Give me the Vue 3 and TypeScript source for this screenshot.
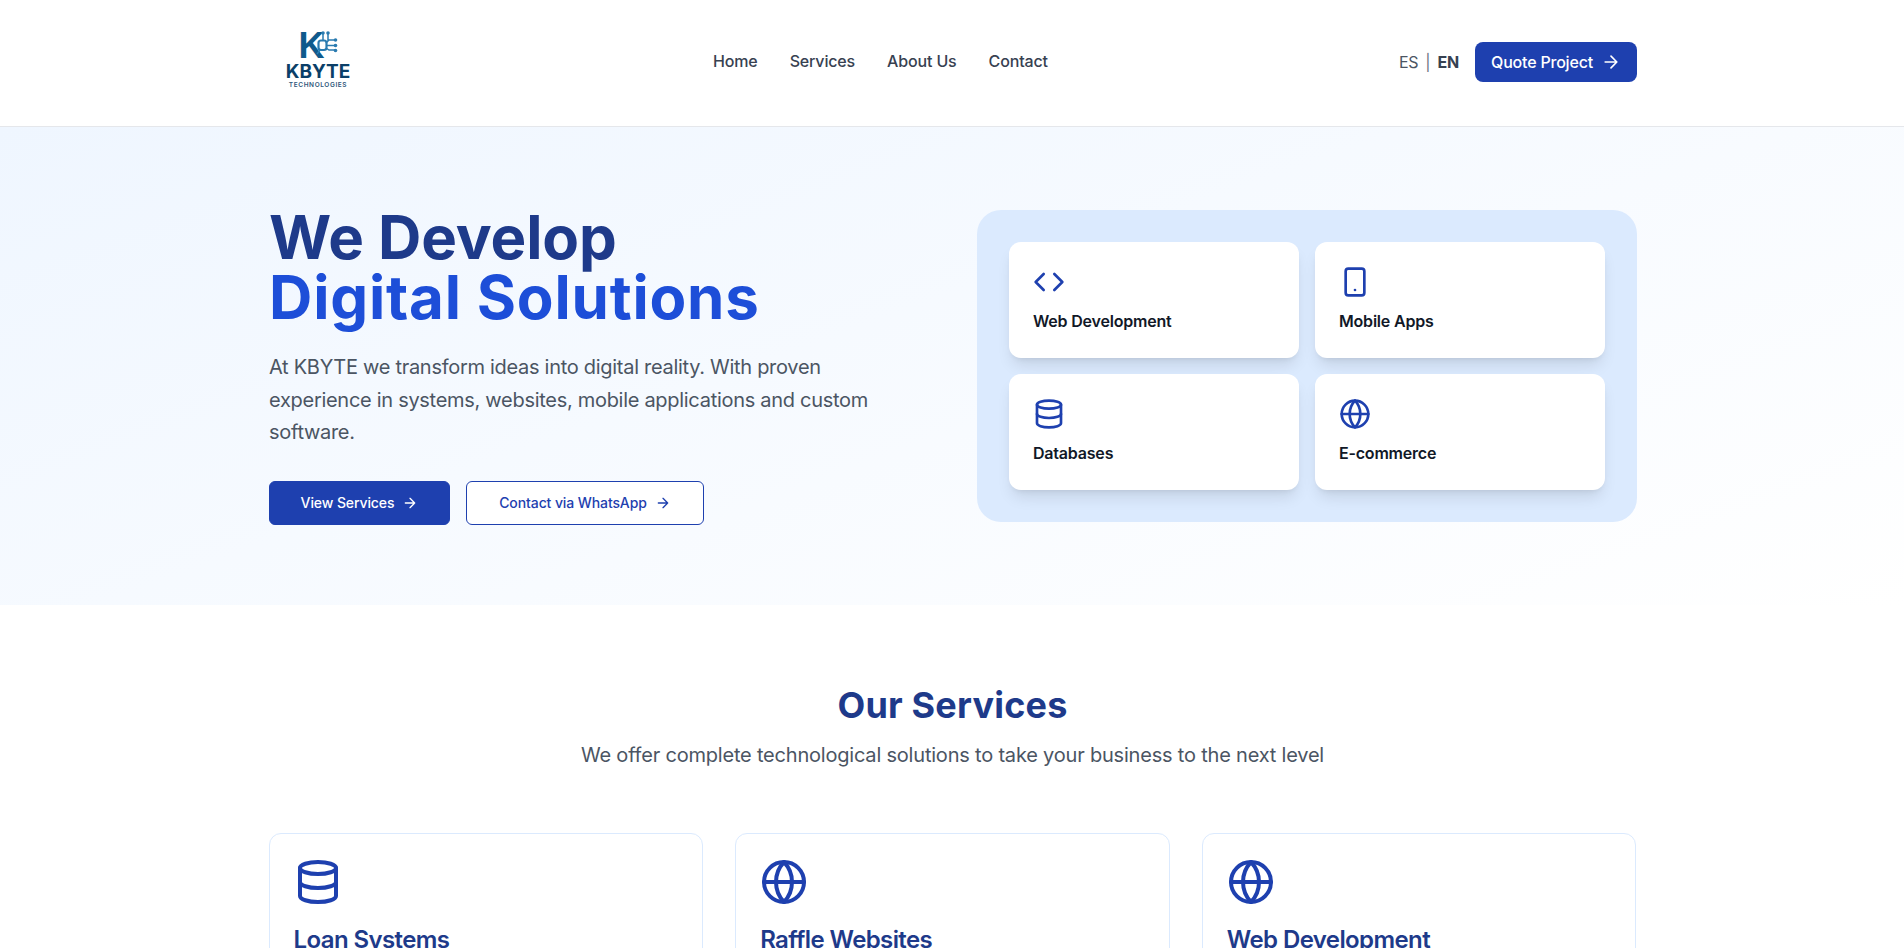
<template>
  <div class="page">
    <header class="header">
      <div class="header__inner">
        <a class="logo" aria-label="KBYTE Technologies">
          <svg width="100" height="94" viewBox="0 0 100 94">
            <text x="29.5" y="43" class="logo__k">K</text>
            <g fill="none" stroke="#2a7bb0" stroke-width="1.5">
              <rect x="49.5" y="25.5" width="8" height="9.5" rx="2.5" stroke-width="2.2" />
              <path d="M54 26v-8M59 26v-8M57 28l3-3h6M57 30.5h9M57 33l3 2h6M51 35l-3 4" />
            </g>
            <g fill="#2a7bb0">
              <circle cx="54" cy="18" r="1.8" />
              <circle cx="59" cy="18" r="1.8" />
              <circle cx="66.5" cy="25" r="1.8" />
              <circle cx="66.5" cy="30.5" r="1.8" />
              <circle cx="66.5" cy="35.5" r="1.8" />
            </g>
            <text x="49" y="63" text-anchor="middle" class="logo__name">KBYTE</text>
            <text x="49" y="72" text-anchor="middle" class="logo__sub">TECHNOLOGIES</text>
          </svg>
        </a>

        <nav class="nav">
          <a v-for="link in links" :key="link" class="nav__link">{{ link }}</a>
        </nav>

        <div class="header__actions">
          <div class="lang">
            <span>ES</span>
            <span class="lang__sep">|</span>
            <strong>EN</strong>
          </div>
          <button class="quote" type="button">
            Quote Project
            <svg class="quote__arrow" viewBox="0 0 24 24"><path d="M5 12h14M12 5l7 7-7 7" /></svg>
          </button>
        </div>
      </div>
    </header>

    <section class="hero">
      <div class="hero__inner">
        <div class="hero__copy">
          <h1 class="hero__title">We Develop<br /><span>Digital Solutions</span></h1>
          <p class="hero__lead">
            At KBYTE we transform ideas into digital reality. With proven
            experience in systems, websites, mobile applications and custom
            software.
          </p>
          <div class="hero__buttons">
            <button class="btn btn--solid" type="button">
              View Services
              <svg class="btn__arrow" viewBox="0 0 24 24"><path d="M5 12h14M12 5l7 7-7 7" /></svg>
            </button>
            <button class="btn btn--outline" type="button">
              Contact via WhatsApp
              <svg class="btn__arrow" viewBox="0 0 24 24"><path d="M5 12h14M12 5l7 7-7 7" /></svg>
            </button>
          </div>
        </div>

        <div class="panel">
          <div v-for="item in highlights" :key="item.label" class="panel__card">
            <svg class="panel__icon" viewBox="0 0 24 24" v-html="icons[item.icon]" />
            <div class="panel__label">{{ item.label }}</div>
          </div>
        </div>
      </div>
    </section>

    <section class="services">
      <div class="services__inner">
        <h2 class="services__title">Our Services</h2>
        <p class="services__lead">We offer complete technological solutions to take your business to the next level</p>
        <div class="services__grid">
          <article v-for="item in services" :key="item.title" class="service">
            <svg class="service__icon" viewBox="0 0 24 24" v-html="icons[item.icon]" />
            <h3 class="service__title">{{ item.title }}</h3>
          </article>
        </div>
      </div>
    </section>
  </div>
</template>

<script setup lang="ts">
type IconName = 'code' | 'phone' | 'database' | 'globe'

const links = ['Home', 'Services', 'About Us', 'Contact']

const icons: Record<IconName, string> = {
  code: '<polyline points="16 18 22 12 16 6" /><polyline points="8 6 2 12 8 18" />',
  phone: '<rect x="5" y="2" width="14" height="20" rx="2" /><path d="M12 18h.01" />',
  database: '<ellipse cx="12" cy="5" rx="9" ry="3" /><path d="M3 5v14a9 3 0 0 0 18 0V5" /><path d="M3 12a9 3 0 0 0 18 0" />',
  globe: '<circle cx="12" cy="12" r="10" /><path d="M12 2a14.5 14.5 0 0 0 0 20 14.5 14.5 0 0 0 0-20" /><path d="M2 12h20" />',
}

const highlights: { label: string; icon: IconName }[] = [
  { label: 'Web Development', icon: 'code' },
  { label: 'Mobile Apps', icon: 'phone' },
  { label: 'Databases', icon: 'database' },
  { label: 'E-commerce', icon: 'globe' },
]

const services: { title: string; icon: IconName }[] = [
  { title: 'Loan Systems', icon: 'database' },
  { title: 'Raffle Websites', icon: 'globe' },
  { title: 'Web Development', icon: 'globe' },
]
</script>

<style>
html,
body {
  margin: 0;
  height: 948px;
  overflow: hidden;
  background: #fff;
}
</style>

<style scoped>
.page {
  font-family: Inter, 'Liberation Sans', sans-serif;
  color: #111827;
  height: 948px;
  overflow: hidden;
}

.header {
  background: #fff;
  border-bottom: 1px solid #e5e7eb;
}

.header__inner {
  width: 1368px;
  height: 126px;
  margin-left: 269px;
  display: flex;
  align-items: center;
  justify-content: space-between;
  padding-bottom: 2px;
  box-sizing: border-box;
}

.logo {
  display: block;
  width: 100px;
  height: 94px;
}

.logo svg {
  display: block;
}

.logo__k {
  font: 700 36px 'Liberation Sans', sans-serif;
  fill: #0f5a8c;
}

.logo__name {
  font: 700 19px Inter, sans-serif;
  fill: #0b3f68;
}

.logo__sub {
  font: 600 6.5px Inter, sans-serif;
  letter-spacing: 0.6px;
  fill: #2f587c;
}

.nav {
  display: flex;
  gap: 32px;
  margin-left: -7px;
  margin-top: -2px;
}

.nav__link {
  font-size: 16px;
  font-weight: 500;
  line-height: 24px;
  color: #374151;
  letter-spacing: -0.15px;
}

.header__actions {
  display: flex;
  align-items: center;
  gap: 16px;
}

.lang {
  display: flex;
  gap: 7px;
  font-size: 16px;
  color: #4b5563;
  letter-spacing: -0.2px;
}

.lang__sep {
  color: #6b7280;
}

.lang strong {
  color: #374151;
  font-weight: 700;
}

.quote {
  display: flex;
  align-items: center;
  justify-content: center;
  gap: 8px;
  width: 162px;
  height: 40px;
  border: 0;
  border-radius: 8px;
  background: #1e40af;
  color: #fff;
  font: 500 16px Inter, sans-serif;
  letter-spacing: -0.2px;
}

.quote__arrow,
.btn__arrow {
  fill: none;
  stroke: currentColor;
  stroke-width: 2;
  stroke-linecap: round;
  stroke-linejoin: round;
}

.quote__arrow {
  width: 20px;
  height: 20px;
}

.hero {
  background: linear-gradient(160deg, #eff6ff 0%, #ffffff 100%);
  padding: 80px 0;
}

.hero__inner {
  width: 1368px;
  margin-left: 269px;
  display: grid;
  grid-template-columns: 1fr 1fr;
  gap: 48px;
  align-items: center;
}

.hero__title {
  margin: 0 0 24px;
  font-size: 60px;
  font-weight: 700;
  line-height: 60px;
  color: #1e3a8a;
  letter-spacing: -0.1px;
}

.hero__title span {
  color: #1d4ed8;
  letter-spacing: 0.8px;
}

.hero__lead {
  max-width: 630px;
  margin: 0 0 32px;
  font-size: 20px;
  line-height: 32.5px;
  color: #4b5563;
  letter-spacing: -0.29px;
}

.hero__buttons {
  display: flex;
  gap: 16px;
}

.btn {
  display: flex;
  align-items: center;
  justify-content: center;
  gap: 8px;
  height: 44px;
  box-sizing: border-box;
  border-radius: 6px;
  font: 500 14px Inter, sans-serif;
  letter-spacing: -0.1px;
}

.btn--solid {
  width: 181px;
  padding: 0;
  background: #1e40af;
  border: 1px solid #1e40af;
  color: #fff;
}

.btn--outline {
  width: 238px;
  padding: 0;
  background: #fff;
  border: 1px solid #1e40af;
  color: #1e40af;
}

.btn__arrow {
  width: 16px;
  height: 16px;
}

.panel {
  display: grid;
  grid-template-columns: 1fr 1fr;
  gap: 16px;
  padding: 32px;
  border-radius: 24px;
  background: #dbeafe;
}

.panel__card {
  padding: 24px;
  border-radius: 12px;
  background: #fff;
  box-shadow: 0 10px 15px -3px rgba(0, 0, 0, 0.1), 0 4px 6px -4px rgba(0, 0, 0, 0.1);
}

.panel__icon,
.service__icon {
  display: block;
  fill: none;
  stroke: #1e40af;
  stroke-width: 2;
  stroke-linecap: round;
  stroke-linejoin: round;
}

.panel__icon {
  width: 32px;
  height: 32px;
  margin-bottom: 11px;
}

.panel__label {
  padding-bottom: 1px;
  font-size: 16px;
  font-weight: 600;
  line-height: 24px;
  letter-spacing: -0.2px;
}

.services {
  padding: 80px 0;
}

.services__inner {
  width: 1368px;
  margin-left: 268.5px;
}

.services__title {
  margin: 0 0 16px;
  text-align: center;
  font-size: 36px;
  font-weight: 700;
  line-height: 40px;
  color: #1e3a8a;
  letter-spacing: 0.2px;
}

.services__lead {
  margin: 0 0 64px;
  text-align: center;
  font-size: 20px;
  line-height: 28px;
  color: #4b5563;
  letter-spacing: -0.2px;
}

.services__grid {
  display: grid;
  grid-template-columns: repeat(3, 1fr);
  gap: 32px;
}

.service {
  min-height: 260px;
  padding: 24px;
  border: 1px solid #dbeafe;
  border-radius: 12px;
}

.service__icon {
  width: 48px;
  height: 48px;
  margin-bottom: 18px;
}

.service__title {
  margin: 0;
  font-size: 24px;
  font-weight: 600;
  line-height: 32px;
  color: #1e3a8a;
  letter-spacing: -0.6px;
}
</style>
